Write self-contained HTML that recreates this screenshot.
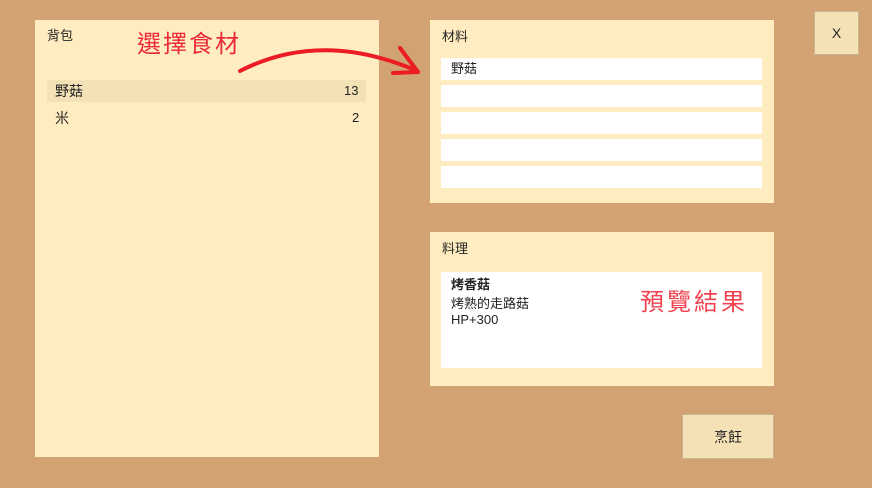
<!DOCTYPE html>
<html><head><meta charset="utf-8"><style>
body{margin:0;width:872px;height:488px;background:#d2a273;position:relative;overflow:hidden;font-family:"Liberation Sans","Noto Sans CJK TC",sans-serif;color:#222;font-size:13px;line-height:16px}
.p{position:absolute;background:#ffecc0}
.a{position:absolute}
.slot{position:absolute;left:441px;width:321px;height:22px;background:#fff}
.btn{position:absolute;background:#f5e1b6;border:1px solid #c8b690;box-sizing:border-box;display:flex;align-items:center;justify-content:center;font-size:14px}
.red{color:#ec2a35;font-size:24px;line-height:30px;letter-spacing:2px;position:absolute}
</style></head><body>
<div class="p" style="left:35px;top:20px;width:344px;height:437px"></div>
<div class="a" style="left:47px;top:28px">背包</div>
<div class="a" style="left:47px;top:80px;width:319px;height:22px;background:#f3e2b6"></div>
<div class="a" style="left:55px;top:83px;font-size:14px">野菇</div>
<div class="a" style="left:344px;top:83px">13</div>
<div class="a" style="left:55px;top:110px;font-size:14px">米</div>
<div class="a" style="left:352px;top:110px">2</div>
<div class="red" style="left:137px;top:30px">選擇食材</div>

<div class="p" style="left:430px;top:20px;width:344px;height:183px"></div>
<div class="a" style="left:442px;top:29px">材料</div>
<div class="slot" style="top:58px"></div>
<div class="a" style="left:451px;top:61px">野菇</div>
<div class="slot" style="top:85px"></div>
<div class="slot" style="top:112px"></div>
<div class="slot" style="top:139px"></div>
<div class="slot" style="top:166px"></div>

<div class="p" style="left:430px;top:232px;width:344px;height:154px"></div>
<div class="a" style="left:442px;top:241px">料理</div>
<div class="a" style="left:441px;top:272px;width:321px;height:96px;background:#fff"></div>
<div class="a" style="left:451px;top:277px;font-weight:bold">烤香菇</div>
<div class="a" style="left:451px;top:296px">烤熟的走路菇</div>
<div class="a" style="left:451px;top:312px">HP+300</div>
<div class="red" style="left:640px;top:288px;color:#f0434f;letter-spacing:3px">預覽結果</div>

<div class="btn" style="left:682px;top:414px;width:92px;height:45px">烹飪</div>
<div class="btn" style="left:814px;top:11px;width:45px;height:44px">X</div>

<svg class="a" style="left:0;top:0" width="872" height="488">
<path d="M240 71 Q320 30 415 70" fill="none" stroke="#ec1c24" stroke-width="4" stroke-linecap="round"/>
<path d="M400 48 L418 72 M393 73 L418 72" fill="none" stroke="#ec1c24" stroke-width="4" stroke-linecap="round"/>
</svg>
</body></html>
